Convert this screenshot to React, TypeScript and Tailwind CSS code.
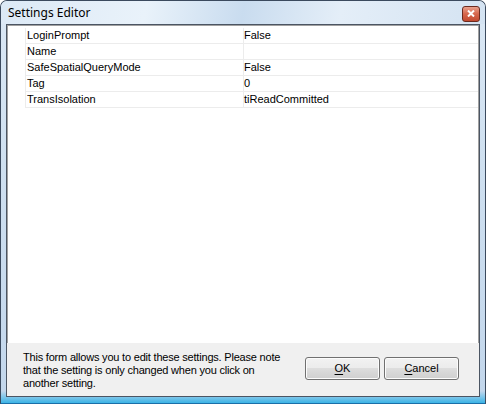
import React from "react";

const rows: { name: string; value: string }[] = [
  { name: "LoginPrompt", value: "False" },
  { name: "Name", value: "" },
  { name: "SafeSpatialQueryMode", value: "False" },
  { name: "Tag", value: "0" },
  { name: "TransIsolation", value: "tiReadCommitted" },
];

function VistaButton({ label, hot }: { label: string; hot: string }) {
  const rest = label.slice(hot.length);
  return (
    <button className="w-[75px] h-[23px] rounded-[3px] border border-[#707070] p-0 bg-[linear-gradient(#f2f2f2_0%,#ebebeb_50%,#dddddd_50%,#cfcfcf_100%)] shadow-[inset_0_0_0_1px_#fcfcfc] text-[11px] text-black leading-none">
      <span className="underline underline-offset-2">{hot}</span>
      {rest}
    </button>
  );
}

export default function App() {
  return (
    <div
      className="w-[486px] h-[404px] flex flex-col border border-[#3b4a5e] border-b-[#1a6fa8] rounded-t-[7px] bg-[linear-gradient(to_bottom,#dbe8f5_0%,#cfe0f0_40%,#c3d7ec_97%,#3bb4e6_100%)] overflow-hidden"
      style={{ fontFamily: "'Liberation Sans', Arial, sans-serif" }}
    >
      {/* title bar */}
      <div className="h-[23px] flex items-center justify-between pl-[7px] pr-[5px] bg-[linear-gradient(100deg,#dce9f6_0%,#e9f2fa_30%,#c9dcef_50%,#e4eef8_70%,#d4e3f2_100%)]">
        <span className="text-[12px] text-black" style={{ fontFamily: "'Noto Sans', 'Liberation Sans', sans-serif" }}>
          Settings Editor
        </span>
        <div className="w-[18px] h-[16px] mt-[2px] rounded-[3px] border border-[#6b2a1f] bg-[linear-gradient(#e8a08c_0%,#d6664c_50%,#c24a30_100%)] flex items-center justify-center">
          <svg width="8" height="7" viewBox="0 0 8 7">
            <path d="M1 0.5 L7 6.5 M7 0.5 L1 6.5" stroke="#ffffff" strokeWidth="2" />
          </svg>
        </div>
      </div>

      {/* client area */}
      <div className="flex-1 flex flex-col mx-[5px] mb-[6px] border border-[#4b5563] bg-[#f0f0f0]">
        {/* grid */}
        <div className="flex-1 bg-white border-l border-t border-r border-[#a0a0a0] pt-[2px]">
          {rows.map((r) => (
            <div key={r.name} className="flex h-[16px] text-[11px] text-black leading-[15px]">
              <div className="w-[18px] border-r border-[#ececec]" />
              <div className="w-[218px] border-r border-b border-[#ececec] pl-[1px]">{r.name}</div>
              <div className="flex-1 border-b border-[#ececec]">{r.value}</div>
            </div>
          ))}
        </div>

        {/* bottom panel */}
        <div className="h-[53px] flex justify-between pl-[16px] pr-[20px]">
          <p className="pt-[8px] text-[11px] leading-[13px] text-black tracking-[-0.2px]">
            This form allows you to edit these settings. Please note
            <br />
            that the setting is only changed when you click on
            <br />
            another setting.
          </p>
          <div className="flex gap-[4px] pt-[14px]">
            <VistaButton label="OK" hot="O" />
            <VistaButton label="Cancel" hot="C" />
          </div>
        </div>
      </div>
    </div>
  );
}
